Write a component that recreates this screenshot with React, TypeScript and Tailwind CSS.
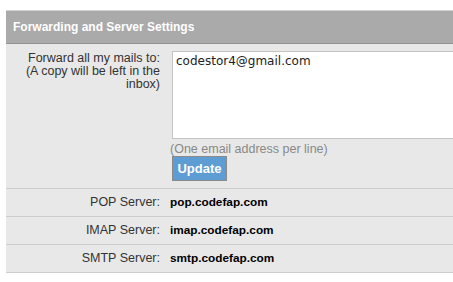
// Painel de encaminhamento e dados dos servidores de correio.
const servers = [
  { label: 'POP Server:', value: 'pop.codefap.com' },
  { label: 'IMAP Server:', value: 'imap.codefap.com' },
  { label: 'SMTP Server:', value: 'smtp.codefap.com' },
];

export default function App() {
  return (
    <div className="h-[282px] w-[453px] overflow-hidden bg-white pl-[6px] pt-[10px] font-['Liberation_Sans',Arial,sans-serif]">
      <div className="w-[470px] bg-[#e8e8e8]">
        <div className="flex h-[34px] items-center border-t border-b border-t-[#d2d2d2] border-b-[#949494] bg-[#aaaaaa] px-[7px] text-[12px] font-bold text-white">
          Forwarding and Server Settings
        </div>

        <div className="grid grid-cols-[164px_1fr] border-b border-[#cdcdcd] pt-[7px] pb-[7px]">
          <div className="pr-[10px] pt-[1px] text-right text-[12.5px] leading-[13px] text-[#333]">
            Forward all my mails to:
            <br />
            (A copy will be left in the inbox)
          </div>
          <div>
            <textarea
              defaultValue="codestor4@gmail.com"
              className="ml-[2px] block h-[88px] w-[300px] resize-none border border-[#c4c4c4] bg-white px-[3px] py-[1px] font-['DejaVu_Sans',Verdana,sans-serif] text-[12px] leading-[16px] text-[#222] outline-none"
            />
            <p className="mt-[3px] text-[12.5px] leading-[14px] text-[#888]">(One email address per line)</p>
            <button className="ml-[2px] block h-[25px] w-[55px] border border-[#8a8a8a] bg-[#5d9dd4] text-center text-[13px] font-bold text-white">
              Update
            </button>
          </div>
        </div>

        {servers.map((s) => (
          <div key={s.label} className="grid h-[28px] grid-cols-[164px_1fr] items-center border-b border-[#cdcdcd]">
            <span className="pr-[10px] text-right text-[12.5px] text-[#333]">{s.label}</span>
            <span className="text-[11.8px] font-bold text-black">{s.value}</span>
          </div>
        ))}
      </div>
    </div>
  );
}
